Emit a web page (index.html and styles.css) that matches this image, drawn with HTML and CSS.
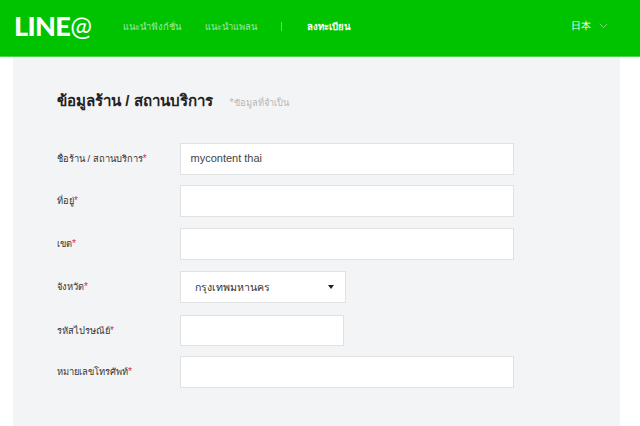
FILE: index.html
```html
<!DOCTYPE html>
<html lang="th">
<head>
<meta charset="utf-8">
<title>LINE@</title>
<link rel="stylesheet" href="styles.css">
</head>
<body>
<header class="topbar">
  <div class="logo">LINE<span class="logo-at">@</span></div>
  <nav class="nav">
    <a class="nav-link nav-feature">แนะนำฟังก์ชั่น</a>
    <a class="nav-link nav-plan">แนะนำแพลน</a>
    <span class="nav-sep"></span>
    <a class="nav-link nav-active">ลงทะเบียน</a>
  </nav>
  <div class="lang">
    <span>日本</span>
    <svg class="lang-chevron" width="9" height="6" viewBox="0 0 9 6"><path d="M.7.8 4.5 4.6 8.3.8" fill="none" stroke="#6fdc6f" stroke-width="1"/></svg>
  </div>
</header>
<main class="panel">
  <div class="heading">
    <h1 class="title">ข้อมูลร้าน / สถานบริการ</h1>
    <span class="note"><span class="note-star">*</span>ข้อมูลที่จำเป็น</span>
  </div>
  <form class="form">
    <div class="row row-first">
      <label class="label">ชื่อร้าน / สถานบริการ<em>*</em></label>
      <div class="field field-wide">mycontent thai</div>
    </div>
    <div class="row">
      <label class="label">ที่อยู่<em>*</em></label>
      <div class="field field-wide"></div>
    </div>
    <div class="row">
      <label class="label">เขต<em>*</em></label>
      <div class="field field-wide"></div>
    </div>
    <div class="row row-select">
      <label class="label">จังหวัด<em>*</em></label>
      <div class="field field-select"><span>กรุงเทพมหานคร</span><i class="caret"></i></div>
    </div>
    <div class="row row-zip">
      <label class="label">รหัสไปรษณีย์<em>*</em></label>
      <div class="field field-zip"></div>
    </div>
    <div class="row">
      <label class="label">หมายเลขโทรศัพท์<em>*</em></label>
      <div class="field field-wide"></div>
    </div>
  </form>
</main>
</body>
</html>
```
FILE: styles.css
```css
* { box-sizing: border-box; }
html, body { margin: 0; height: 100%; overflow: hidden; background: #fff; }
body { font-family: "Liberation Sans", "Noto Sans", "DejaVu Sans", sans-serif; color: #333; }

.topbar {
  height: 57px;
  background: #00c300;
  border-bottom: 1px solid #4cd64c;
  display: flex;
  align-items: center;
  padding: 0 32px 0 14px;
  color: #fff;
}
.logo { width: 109px; font: 900 27px/1 "Lato", "Liberation Sans", sans-serif; letter-spacing: -.6px; padding-bottom: 5px; }
.logo-at { font-weight: 400; font-size: 26px; }
.nav { display: flex; align-items: center; font-size: 9.3px; flex: 1; padding-bottom: 4px; }
.nav-link { color: #a6e8a6; }
.nav-feature { width: 82px; }
.nav-plan { width: 76px; }
.nav-sep { width: 1px; height: 9px; background: #66db66; margin-right: 25px; }
.nav-active { color: #fff; font-weight: bold; font-size: 9.6px; }
.lang { display: flex; align-items: center; gap: 8px; font-size: 10px; padding-bottom: 4px; }

.panel {
  width: 607px;
  margin-left: 13px;
  height: 369px;
  background: #f3f4f6;
  padding: 32px 44px 0;
}
.heading { display: flex; align-items: baseline; gap: 17px; height: 54px; }
.title { margin: 0; font-size: 15.1px; font-weight: bold; color: #222; }
.note { font-size: 9.2px; color: #b5b5b5; }
.note-star { font-size: 11px; }

.form { display: flex; flex-direction: column; }
.row { display: flex; align-items: center; height: 32px; margin-bottom: 11px; }
.row-first { margin-bottom: 10px; }
.row-select { margin-bottom: 12px; }
.row-zip { height: 31px; margin-bottom: 10px; }
.label { width: 123px; font-size: 9.3px; color: #333; padding-bottom: 1px; }
.label em { font-style: normal; font-size: 10px; color: #e0245e; }
.field {
  height: 32px;
  background: #fff;
  border: 1px solid #dfe1e3;
  font-size: 11px;
  color: #444;
  display: flex;
  align-items: center;
}
.field-wide { width: 334px; padding: 0 10px 2px 9.5px; }
.field-select { width: 166px; padding: 0 11px 0 14px; justify-content: space-between; color: #333; font-size: 10.6px; }
.field-zip { width: 164px; height: 31px; }
.caret { width: 0; height: 0; border: 3.5px solid transparent; border-top: 4px solid #222; border-bottom: 0; }
```
